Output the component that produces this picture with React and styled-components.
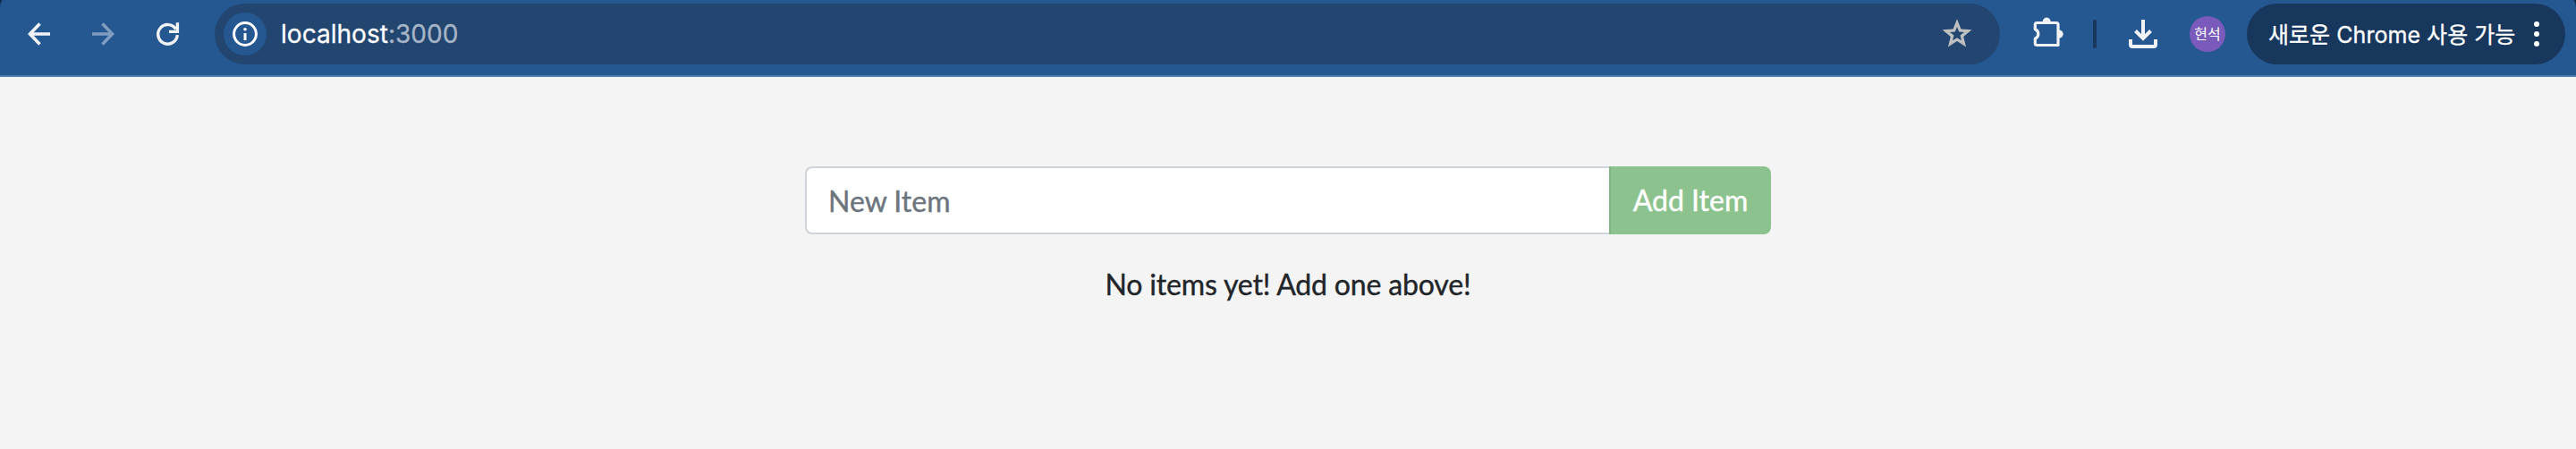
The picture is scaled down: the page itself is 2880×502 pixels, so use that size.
import React from "react";
import styled, { createGlobalStyle } from "styled-components";

const GlobalStyle = createGlobalStyle`
  *, *::before, *::after { box-sizing: border-box; }
  body { margin: 0; background: #f4f4f4; }
`;

const Page = styled.div`
  min-height: 502px;
  background: #f4f4f4;
`;

const Frame = styled.header`
  height: 86px;
  background: #0e2a4c;
`;

const Toolbar = styled.div`
  height: 86px;
  padding: 4px 12px 12px 20px;
  display: flex;
  align-items: center;
  background: #255791;
  border-bottom: 2px solid #4a79ab;
  border-radius: 3px 3px 0 0 / 10px 10px 0 0;
  font-family: Inter, "Noto Sans CJK KR", sans-serif;
`;

const NavButtons = styled.nav`
  display: flex;
  gap: 24px;
  margin-right: 28px;
`;

const IconButton = styled.button`
  width: 48px;
  height: 48px;
  padding: 0;
  border: 0;
  background: none;
  color: ${(p) => p.$color || "#f0f2f5"};
  display: flex;
  align-items: center;
  justify-content: center;
  svg { display: block; overflow: visible; }
`;

const AddressBar = styled.div`
  flex: 1;
  height: 68px;
  padding: 0 24px 0 10px;
  border-radius: 34px;
  background: #224670;
  display: flex;
  align-items: center;
`;

const SiteInfo = styled.span`
  width: 48px;
  height: 48px;
  border-radius: 50%;
  background: #255791;
  color: #fff;
  display: flex;
  align-items: center;
  justify-content: center;
`;

const Url = styled.span`
  flex: 1;
  margin-left: 16px;
  font-size: 28px;
  line-height: 34px;
  letter-spacing: 0.03px;
  color: #fff;
  -webkit-text-stroke: 0.3px;
`;

const Port = styled.span`
  color: #a6b5c6;
`;

const Actions = styled.div`
  display: flex;
  align-items: center;
  margin: 0 24px 0 30px;
`;

const Divider = styled.span`
  width: 4px;
  height: 32px;
  margin: 0 28px 0 26px;
  border-radius: 2px;
  background: #18375d;
`;

const Avatar = styled.span`
  width: 40px;
  height: 40px;
  margin-left: 28px;
  border-radius: 50%;
  background: #7a5abb;
  color: #fff;
  font: 400 16px/38px "Noto Sans CJK KR", sans-serif;
  text-align: center;
`;

const UpdatePill = styled.button`
  width: 356px;
  height: 68px;
  padding: 0 29px 0 24px;
  border: 0;
  border-radius: 34px;
  background: #18375d;
  color: #fff;
  display: flex;
  align-items: center;
  justify-content: space-between;
  font: 400 25px/34px Inter, "Noto Sans CJK KR", sans-serif;
  white-space: nowrap;
  letter-spacing: 0.05px;
  -webkit-text-stroke: 0.3px;
`;

const PillLabel = styled.span`
  padding-top: 2px;
`;

const Main = styled.main`
  width: 1080px;
  margin: 0 auto;
  padding-top: 100px;
  font-family: Lato, sans-serif;
  font-size: 32px;
  line-height: 48px;
  color: #212529;
  -webkit-text-stroke: 0.4px;
`;

const InputGroup = styled.form`
  display: flex;
  height: 76px;
  margin-bottom: 32px;
`;

const ItemInput = styled.input`
  flex: 1;
  min-width: 0;
  padding: 14px 24px 12px;
  border: 2px solid #ced4da;
  border-right: 0;
  border-radius: 8px 0 0 8px;
  background: #fff;
  font: inherit;
  outline: 0;
  &::placeholder { color: #6c757d; opacity: 1; }
`;

const AddButton = styled.button`
  width: 181px;
  padding: 0 1px 0 0;
  border: 0;
  border-left: 2px solid #7fb582;
  border-radius: 0 8px 8px 0;
  background: #8cc28d;
  color: #fff;
  font: inherit;
`;

const EmptyMessage = styled.p`
  margin: 0;
  text-align: center;
  letter-spacing: -0.16px;
`;

const BackIcon = () => (
  <svg width="26" height="26" viewBox="0 0 26 26" fill="none" stroke="currentColor" strokeWidth="3.6">
    <path d="M25 13H3M13.5 1.5L2.5 13l11 11.5" />
  </svg>
);

const ForwardIcon = () => (
  <svg width="26" height="26" viewBox="0 0 26 26" fill="none" stroke="currentColor" strokeWidth="3.6">
    <path d="M0 13h22M11.5 1.5l11 11.5-11 11.5" />
  </svg>
);

const ReloadIcon = () => (
  <svg width="26" height="26" viewBox="0 0 26 26" fill="none" stroke="currentColor" strokeWidth="3.4">
    <path d="M23.3 14.2A10.8 10.8 0 1 1 21.6 7.5M23.4 0.2v10.2H14" />
  </svg>
);

const InfoIcon = () => (
  <svg width="28" height="28" viewBox="0 0 28 28" fill="none" stroke="currentColor" strokeWidth="3">
    <circle cx="14" cy="14" r="12.4" />
    <path d="M14 13v8" />
    <circle cx="14" cy="8.8" r="1.8" fill="currentColor" stroke="none" />
  </svg>
);

const StarIcon = () => (
  <svg width="34" height="34" viewBox="0 0 34 34" fill="currentColor" fillRule="evenodd">
    <path d="M17 .3L21.5 11.4 33.4 12.2 24.2 19.9 27.1 31.4 17 25.1 6.9 31.4 9.8 19.9.6 12.2 12.5 11.4zM17 9.1L14.8 14.5 9 14.9 13.5 18.6 12.1 24.3 17 21.2 21.9 24.3 20.5 18.6 25 14.9 19.2 14.5z" />
  </svg>
);

const PuzzleIcon = () => (
  <svg width="34" height="34" viewBox="0 2 34 34">
    <path
      d="M4.3 6.5H26Q28 6.5 28 8.5V31.5H4.3Q2.3 31.5 2.3 29.5V24.2A5.6 5.6 0 0 0 2.3 13.8V8.5Q2.3 6.5 4.3 6.5Z"
      fill="none"
      stroke="currentColor"
      strokeWidth="3.2"
      strokeLinejoin="round"
    />
    <path d="M10.6 6a4.6 5.6 0 0 1 9.2 0zM28.5 14.4a5.2 4.7 0 0 1 0 9.4z" fill="currentColor" />
  </svg>
);

const DownloadIcon = () => (
  <svg width="32" height="32" viewBox="0 0 32 32" fill="none" stroke="currentColor" strokeWidth="4">
    <path d="M16 0v21M7.5 12.5L16 21l8.5-8.5" />
    <path d="M2 22v6q0 2 2 2h24q2 0 2-2v-6" />
  </svg>
);

const MoreIcon = () => (
  <svg width="6" height="28" viewBox="0 0 6 28" fill="currentColor">
    <circle cx="3" cy="3" r="3" />
    <circle cx="3" cy="14" r="3" />
    <circle cx="3" cy="25" r="3" />
  </svg>
);

export default function App() {
  return (
    <Page>
      <GlobalStyle />
      <Frame>
        <Toolbar>
          <NavButtons>
            <IconButton aria-label="Back"><BackIcon /></IconButton>
            <IconButton aria-label="Forward" $color="#7f9dc1"><ForwardIcon /></IconButton>
            <IconButton aria-label="Reload"><ReloadIcon /></IconButton>
          </NavButtons>
          <AddressBar>
            <SiteInfo><InfoIcon /></SiteInfo>
            <Url>localhost<Port>:3000</Port></Url>
            <IconButton aria-label="Bookmark" $color="#bdbfc1"><StarIcon /></IconButton>
          </AddressBar>
          <Actions>
            <IconButton aria-label="Extensions"><PuzzleIcon /></IconButton>
            <Divider />
            <IconButton aria-label="Downloads"><DownloadIcon /></IconButton>
            <Avatar>현석</Avatar>
          </Actions>
          <UpdatePill>
            <PillLabel>새로운 Chrome 사용 가능</PillLabel>
            <MoreIcon />
          </UpdatePill>
        </Toolbar>
      </Frame>
      <Main>
        <InputGroup onSubmit={(e) => e.preventDefault()}>
          <ItemInput placeholder="New Item" aria-label="New item" />
          <AddButton type="submit">Add Item</AddButton>
        </InputGroup>
        <EmptyMessage>No items yet! Add one above!</EmptyMessage>
      </Main>
    </Page>
  );
}
